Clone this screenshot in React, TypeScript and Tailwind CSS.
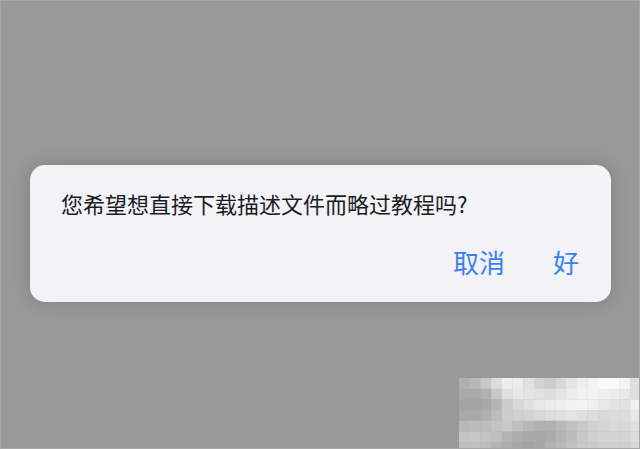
import React from "react";

const mosaic = [
  ["b0", "b8", "c8", "dc", "ee", "ec", "e0", "d4", "cc", "d8", "e4", "ee", "f4", "fa", "fa", "f4", "e0"],
  ["a8", "a8", "b0", "c8", "e0", "e8", "e4", "e0", "dc", "e4", "ec", "f2", "f4", "f0", "ec", "e8", "e0"],
  ["a4", "a4", "a8", "b4", "cc", "d8", "e0", "e8", "ec", "f0", "f2", "f4", "f0", "e8", "e4", "e0", "f0"],
  ["a8", "a8", "b0", "bc", "cc", "d0", "d4", "d8", "dc", "e0", "e4", "e0", "dc", "d8", "dc", "dc", "e8"],
  ["b8", "bc", "bc", "c4", "c8", "c0", "b8", "b0", "b0", "b8", "c0", "c8", "d0", "d4", "d8", "d8", "e0"],
  ["c4", "c8", "c4", "c0", "b4", "ac", "a8", "a8", "ac", "b4", "bc", "c8", "d0", "d4", "d4", "d4", "dc"],
  ["c0", "c0", "bc", "b4", "ac", "a8", "a4", "a8", "b0", "b8", "c0", "c8", "cc", "d0", "d0", "d0", "d8"],
];

function Mosaic() {
  return (
    <svg className="absolute right-0 bottom-0" width="180" height="70" viewBox="0 0 180 70">
      {mosaic.map((row, r) =>
        row.map((g, c) => (
          <rect key={`${r}-${c}`} x={c * 10.7} y={r * 10.7} width="11" height="11" fill={`#${g}${g}${g}`} />
        ))
      )}
    </svg>
  );
}

export default function App() {
  return (
    <div
      className="relative h-[449px] w-[640px] overflow-hidden border border-[#a8a8a8] bg-[#999999] pl-[29px] pt-[164px]"
      style={{ fontFamily: '"Noto Sans CJK SC", "Noto Sans", sans-serif' }}
    >
      <div className="flex h-[137px] w-[581px] flex-col rounded-[15px] bg-[#f2f2f7] shadow-[0_0_18px_rgba(0,0,0,0.18)]">
        <p className="pl-[31px] pt-[27px] text-[22px] leading-[22px] text-[#1c1c1e]">
          您希望想直接下载描述文件而略过教程吗?
        </p>
        <div className="mt-[35px] flex justify-end gap-[48px] pr-[32px] text-[26px] leading-[26px] text-[#3a80f5]">
          <button>取消</button>
          <button>好</button>
        </div>
      </div>
      <Mosaic />
    </div>
  );
}
